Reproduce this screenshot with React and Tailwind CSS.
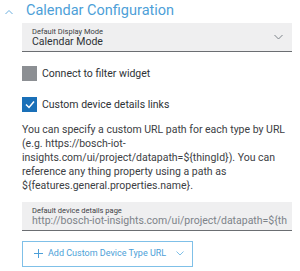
export default function App() {
  return (
    <div className="h-[271px] w-[300px] overflow-hidden bg-white font-['Roboto',sans-serif]">
      <div className="flex h-[23px] items-center">
        <svg className="ml-[5px] h-[8px] w-[8px]" viewBox="0 0 8 8" fill="none" stroke="#6aaede" strokeWidth="1">
          <path d="M0.5 6 L4 2.5 L7.5 6" />
        </svg>
        <span className="ml-[13px] text-[14.5px] leading-none text-[#4d9fd8]">Calendar Configuration</span>
      </div>

      <div className="ml-[22px] mr-[8px]">
        <div className="flex h-[29px] items-center border-b border-[#6b6e72] bg-[#efeff0] pl-[10px] pr-[9px]">
          <div className="flex-1">
            <div className="text-[7.5px] leading-[9px] text-[#3c4044]">Default Display Mode</div>
            <div className="text-[10.5px] leading-[12px] text-[#2e3236]">Calendar Mode</div>
          </div>
          <svg className="h-[6px] w-[9px]" viewBox="0 0 9 6" fill="none" stroke="#7d8389" strokeWidth="1">
            <path d="M0.5 1 L4.5 5 L8.5 1" />
          </svg>
        </div>

        <div className="mt-[14px] flex items-center">
          <div className="h-[15px] w-[15px] bg-[#8c8f93]" />
          <span className="ml-[5px] text-[10.5px] text-[#2e3236]">Connect to filter widget</span>
        </div>

        <div className="mt-[15px] flex items-center">
          <div className="flex h-[15px] w-[15px] items-center justify-center bg-[#1a70b8]">
            <svg className="h-[9px] w-[10px]" viewBox="0 0 10 9" fill="none" stroke="white" strokeWidth="1.5">
              <path d="M1 4.5 L4 7.5 L9 1.5" />
            </svg>
          </div>
          <span className="ml-[5px] text-[10.5px] text-[#2e3236]">Custom device details links</span>
        </div>

        <p className="mt-[10px] pr-[2px] text-[10.5px] leading-[14px] text-[#3c4044]">
          You can specify a custom URL path for each type by URL (e.g. https://bosch-iot-insights.com/ui/project/datapath=${'{thingId}'}). You can reference any thing property using a path as ${'{features.general.properties.name}'}.
        </p>

        <div className="mt-[9px] h-[29px] border-b border-[#6b6e72] bg-[#efeff0] pl-[10px] pr-[5px] pt-[4px]">
          <div className="text-[7.5px] leading-[9px] text-[#3c4044]">Default device details page</div>
          <div className="min-w-0 overflow-hidden whitespace-nowrap text-[10.5px] leading-[12px] text-[#7d8389]">http://bosch-iot-insights.com/ui/project/datapath=${'{thingId}'}</div>
        </div>

        <button
          type="button"
          className="mt-[10px] flex h-[26px] w-[171px] items-center whitespace-nowrap border border-[#7fc0e8] pl-[11px] text-[9px] text-[#4d9fd8]"
        >
          <svg className="h-[9px] w-[9px] shrink-0" viewBox="0 0 9 9" fill="none" stroke="#4d9fd8" strokeWidth="1">
            <path d="M4.5 0 V9 M0 4.5 H9" />
          </svg>
          <span className="ml-[5px]">Add Custom Device Type URL</span>
          <svg className="ml-[10px] h-[5px] w-[8px] shrink-0" viewBox="0 0 8 5" fill="none" stroke="#7fc0e8" strokeWidth="1">
            <path d="M0.5 0.5 L4 4 L7.5 0.5" />
          </svg>
        </button>
      </div>
    </div>
  );
}
